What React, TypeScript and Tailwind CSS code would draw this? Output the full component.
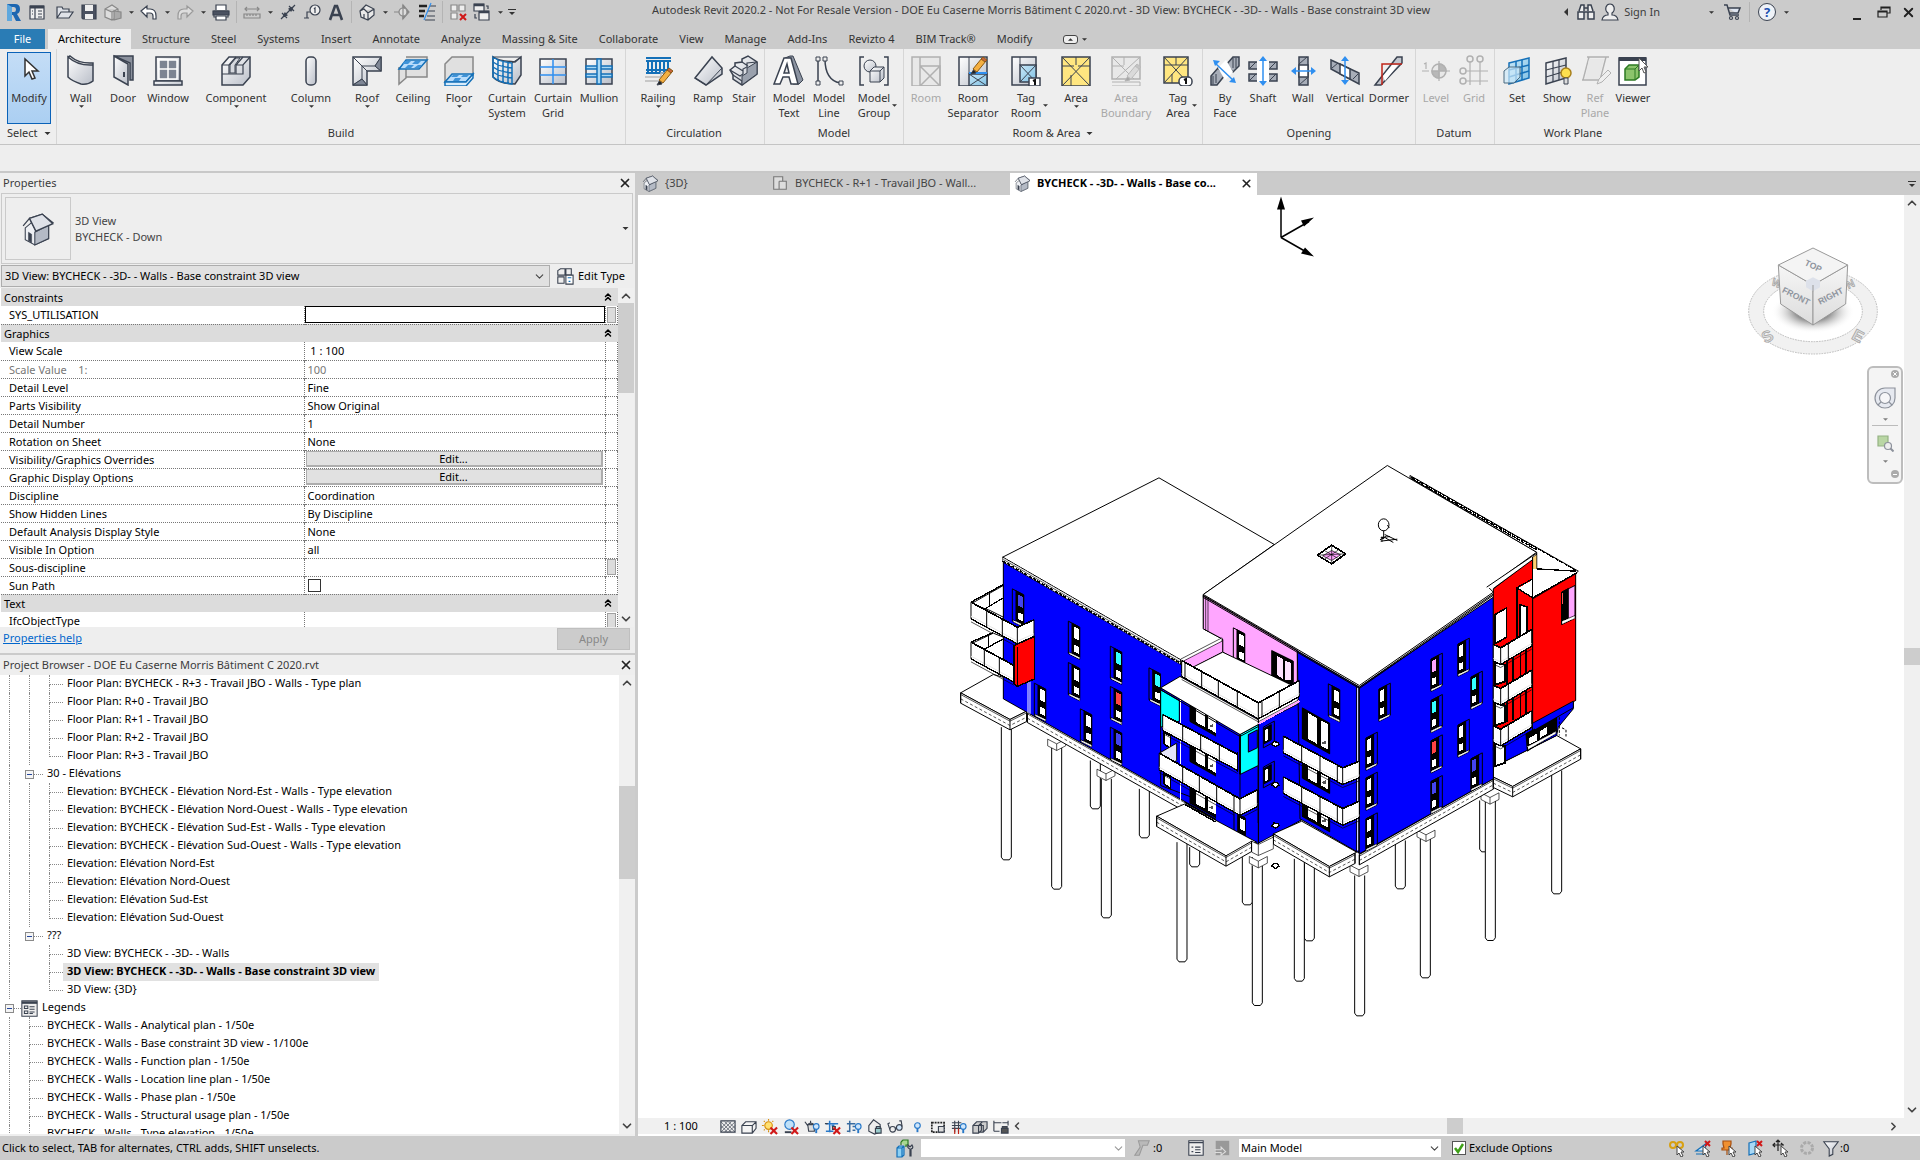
import type { ReactNode } from "react";
import { clsx } from "clsx";
import { ChevronDown, ChevronLeft, ChevronRight, ChevronUp, ChevronsUp, X } from "lucide-react";

const INK = "#3a4250";
const BLUE = "#1470b8";
const METAL = "url(#metal)";
const GLASS = "url(#glass)";
const GOLD = "#ffe680";

/* ---------- shared bits ---------- */

function Ico({ children, size = 32, box = 32, off }: { children: ReactNode; size?: number; box?: number; off?: boolean }) {
  return (
    <svg
      width={size}
      height={size}
      viewBox={`0 0 ${box} ${box}`}
      fill="none"
      stroke={INK}
      strokeWidth={box > 24 ? 1.5 : 1.2}
      className={clsx("shrink-0", off && "opacity-35 grayscale")}
      aria-hidden="true"
    >
      {children}
    </svg>
  );
}

function Caret({ size = 5 }: { size?: number }) {
  return (
    <svg width={size} height="3" viewBox="0 0 6 3" className="shrink-0" aria-hidden="true">
      <path d="M0 0h6L3 3z" fill="#333" />
    </svg>
  );
}

function Defs() {
  return (
    <svg width="0" height="0" className="absolute" aria-hidden="true">
      <defs>
        <linearGradient id="metal" x1="0" y1="0" x2="1" y2="1">
          <stop offset="0" stopColor="#ffffff" />
          <stop offset="1" stopColor="#b9bec8" />
        </linearGradient>
        <linearGradient id="glass" x1="0" y1="0" x2="1" y2="1">
          <stop offset="0" stopColor="#c9e8f8" />
          <stop offset="1" stopColor="#7fc0e4" />
        </linearGradient>
        <linearGradient id="cubeFace" x1="0" y1="0" x2="0" y2="1">
          <stop offset="0" stopColor="#f6f6f6" />
          <stop offset="1" stopColor="#dcdcdc" />
        </linearGradient>
        <radialGradient id="cubeShadow">
          <stop offset="0.4" stopColor="#8c8c8c" />
          <stop offset="1" stopColor="#ffffff" stopOpacity="0" />
        </radialGradient>
      </defs>
    </svg>
  );
}

const pencil = (
  <g strokeWidth="1">
    <path d="M17 27l2 4-5 1z" fill="#222" transform="translate(1 -1)" />
    <path d="M17 26l9-11 4 3-9 11z" fill="#f5b041" stroke="#8a5a14" />
    <path d="M25 16l2-2 4 3-2 2z" fill="#c8643c" stroke="#8a5a14" />
  </g>
);

/* ---------- ribbon icons ---------- */

const icons: Record<string, ReactNode> = {
  modify: <path d="M12 5v17l4-4 3 7 3-1-3-7h6z" fill="#fff" stroke="#333" />,
  wall: <path d="M3 3q10 9 25 8v16q-5 4-12 3Q7 27 3 23zM3 3l2-1q9 8 23 7v2" fill={METAL} />,
  door: (
    <>
      <path d="M7 2h19v24h-3V9z" fill="#8a909c" />
      <path d="M7 2l14 8v21L7 23z" fill={METAL} />
      <path d="M17 18v5" strokeWidth="2" />
    </>
  ),
  window: (
    <>
      <path d="M4 3h24v24H4z" fill={METAL} />
      <path d="M7 6h18v19H7z" fill="#7c8492" stroke="#fff" />
      <path d="M16 6v19M7 15h18" stroke="#fff" />
      <path d="M2 27h28v4H2z" fill={METAL} />
    </>
  ),
  component: (
    <>
      <path d="M2 11l7-8h21v20l-7 8H2z" fill={METAL} />
      <path d="M2 11h7v9h7v-9h7l7-8M9 11l7-8M16 11l7-8M23 11v9H9M2 20h7" strokeWidth="1.2" />
      <path d="M10 11l6-7h4l-5 7v8h-5z" fill="#d5d8de" strokeWidth="1" />
    </>
  ),
  column: <rect x="11" y="3" width="10" height="28" rx="4" fill={METAL} />,
  roof: (
    <>
      <path d="M2 3h28v14H16v14H2z" fill={METAL} />
      <path d="M2 3l9 9h13l6-9M11 12v13l-9 6M24 12l6 5M11 25l5 6M16 17l-5-5" strokeWidth="1" />
      <path d="M11 25l5 6H2zM24 12l6-9v14z" fill="#7f8796" strokeWidth="1" />
    </>
  ),
  ceiling: (
    <>
      <path d="M2 13v17l7-6V8M9 3h21v20H9" fill="#e0e0e0" stroke="#888" />
      <path d="M9 6h21l-8 9H2z" fill="#b8dcfb" stroke={BLUE} />
      <path d="M8 7h6l-3 3h-6zM18 7h6l-3 3h-6zM11 11h6l-3 3H8zM21 11h4l-3 3h-5z" fill="#3f93d8" stroke="none" />
    </>
  ),
  floor: (
    <>
      <path d="M2 10l7-7h21v18H9L2 28z" fill="#e0e0e0" stroke="#888" />
      <path d="M9 20h21l-7 8H2z" fill="#b8dcfb" stroke={BLUE} />
      <path d="M2 28h21l7-8v4l-7 8H2z" fill="#d8ecfc" stroke={BLUE} />
      <path d="M10 21h6l-2 2H8zM20 21h6l-2 2h-6zM12 24h6l-2 3h-6z" fill="#3f93d8" stroke="none" />
    </>
  ),
  curtainSystem: (
    <>
      <path d="M2 3q6 4 22 5l6-5v18l-6 9Q8 30 2 23z" fill={METAL} />
      <path d="M2 3q7 5 19 6v21Q9 29 2 23zM7 6v20M12 8v20M17 9v20M2 8q7 5 19 6M2 13q7 5 19 6M2 18q7 5 19 6" stroke={BLUE} />
      <path d="M2 3h28L21 9" strokeWidth="1" />
    </>
  ),
  curtainGrid: (
    <>
      <path d="M3 5h26v25H3z" fill={METAL} />
      <path d="M16 5v25M3 13h26M3 21h26" stroke="#2f8ff0" />
    </>
  ),
  mullion: (
    <>
      <path d="M3 5h26v25H3z" fill={METAL} />
      <path d="M3 12h26v3H3zM3 20h26v3H3z" fill="#a8d8f5" stroke={BLUE} />
      <path d="M14 5h4v25h-4z" fill="#a8d8f5" stroke={BLUE} />
    </>
  ),
  railing: (
    <>
      <path d="M4 4h25M4 7h25M4 16h25M4 19h25M6 7v12M10 7v12M14 7v12M18 7v12M22 7v12M26 7v12" stroke={BLUE} strokeWidth="2" />
      <path d="M3 23h16v-4h6M3 27h14" stroke="#bbb" />
      {pencil}
    </>
  ),
  ramp: (
    <>
      <path d="M3 24L20 3l10 11v6L14 31z" fill={METAL} />
      <path d="M3 24l11 7L30 14" strokeWidth="1" />
    </>
  ),
  stair: (
    <>
      <path d="M2 16l5-4 0-3 7-1v-3l6-3 9 6v12L14 31l-9-6v-4z" fill={METAL} />
      <path d="M2 16l10 6 3-2v-5l4-2V9l10-1M5 21l9 6v4M7 12l8 5M14 8l6 4" strokeWidth="1.2" />
      <path d="M14 31V22l5-3v-5l10-6v12z" fill="#9aa1ad" strokeWidth="1" />
    </>
  ),
  modelText: (
    <>
      <path d="M12 4l5-2h3l10 24-4 4h-6z" fill="#8b93a1" strokeWidth="1" />
      <path fillRule="evenodd" d="M11 4h7l7 26h-7l-2-7h-6l-3 7H1zM14 10l-3 9h5z" fill="#fff" />
    </>
  ),
  modelLine: (
    <>
      <path d="M5 5v24M12 5q0 21 15 24" />
      <path d="M3 3h4v4H3zM3 27h4v4H3zM10 3h4v4h-4zM26 27h4v4h-4z" fill="#eee" strokeWidth="1" />
    </>
  ),
  modelGroup: (
    <>
      <path d="M6 3H2v28h4M26 3h4v28h-4" />
      <circle cx="12" cy="12" r="6" fill={METAL} strokeWidth="1" />
      <path d="M12 17l4-4h10v11l-4 4H12z" fill={METAL} strokeWidth="1" />
      <path d="M12 17h10v11M22 17l4-4" strokeWidth="1" />
    </>
  ),
  room: (
    <>
      <path d="M2 3h28v29H2z" fill="#ddd" />
      <path d="M10 12h20v20H10zM10 3v9M10 12l20 20M30 12L10 32" />
    </>
  ),
  roomSeparator: (
    <>
      <path d="M2 3h28v29H2z" fill={METAL} />
      <path d="M12 20h18v12H12z" fill={GLASS} />
      <path d="M12 3v17M12 20l18 12M30 20L12 32" strokeWidth="1" />
      <path d="M12 19h18" stroke="#2f8ff0" strokeWidth="2" />
      <g transform="translate(-1 -11)">{pencil}</g>
    </>
  ),
  tagRoom: (
    <>
      <path d="M2 3h24v28H2z" fill={METAL} />
      <path d="M10 11h16v17H10z" fill={GLASS} />
      <path d="M10 3v8M10 11l16 17M26 11L10 28" strokeWidth="1" />
      <path d="M19 24h11v8H19z" fill="#fff" />
      <path d="M23 27l2-1v5" strokeWidth="2" stroke="#111" />
    </>
  ),
  area: (
    <>
      <path d="M2 3h28v29H2z" fill={GOLD} />
      <path d="M2 3l28 29M30 3L2 32M16 3v8M2 12h12M18 12h12M11 21v11" strokeWidth="1" />
    </>
  ),
  areaBoundary: (
    <>
      <path d="M2 3h28v22H2z" fill="#ddd" />
      <path d="M2 3l22 22M30 3L6 25M2 28h28v4H2M14 3v8M2 12h12" strokeWidth="1" />
      <g transform="translate(0 -4)">{pencil}</g>
    </>
  ),
  tagArea: (
    <>
      <path d="M2 3h24v26H2z" fill={GOLD} />
      <path d="M2 3l24 26M26 3L2 29M14 3v8M2 11h24M10 20v9" strokeWidth="1" />
      <rect x="17" y="23" width="13" height="9" rx="4" fill="#fff" />
      <path d="M22 26l2-1v5" strokeWidth="2" stroke="#111" />
    </>
  ),
  byFace: (
    <>
      <path d="M2 31v-9l7-8 7 7-8 10zM17 11l7-8h6v9l-6 6z" fill="#a7adb8" />
      <path d="M9 14l8-8 7 12-8 8z" fill="#fff" stroke="none" />
      <path d="M4 22v8M7 20v9M24 4v10M27 4v10" strokeWidth="1" />
      <path d="M6 9l19 18" stroke="#2f8ff0" />
      <path d="M4 6l7 1-5 5zM27 29l-7-1 5-5z" fill="#2f8ff0" stroke="none" />
    </>
  ),
  shaft: (
    <>
      <path d="M2 8h28v7H2zM2 20h28v7H2z" fill="#a7adb8" />
      <path d="M10 7h12v21H10z" fill="#fff" stroke="none" />
      <path d="M3 14l6-6M23 14l6-6M3 26l6-6M23 26l6-6" strokeWidth="1" />
      <path d="M16 6v22" stroke="#2f8ff0" />
      <path d="M16 2l4 5h-8zM16 32l4-5h-8z" fill="#2f8ff0" stroke="none" />
    </>
  ),
  wallOpening: (
    <>
      <path d="M12 3h9v28h-9z" fill="#a7adb8" />
      <path d="M12 11h9v12h-9z" fill="#fff" />
      <path d="M12 10l8-7M12 31l8-7" strokeWidth="1" />
      <path d="M7 17h18" stroke="#2f8ff0" />
      <path d="M4 17l5-4v8zM29 17l-5-4v8z" fill="#2f8ff0" stroke="none" />
    </>
  ),
  vertical: (
    <>
      <path d="M2 6l28 13v11L2 15z" fill="#a7adb8" />
      <path d="M11 10l10 5v10l-10-5z" fill="#fff" />
      <path d="M3 14l6-5M24 25l5-5" strokeWidth="1" />
      <path d="M16 5v23" stroke="#2f8ff0" />
      <path d="M16 2l4 5h-8zM16 31l4-5h-8z" fill="#2f8ff0" stroke="none" />
    </>
  ),
  dormer: (
    <>
      <path d="M2 31L24 3h5v6L8 31z" fill="#c3c7cf" />
      <path d="M10 22l9-11h6L12 27z" fill="#fff" stroke="none" />
      <path d="M9 31V10h20" stroke="#c02418" />
    </>
  ),
  level: (
    <>
      <circle cx="19" cy="17" r="7" fill="#ddd" />
      <path d="M19 10v7h7a7 7 0 0 0-7-7M19 24v-7h-7a7 7 0 0 0 7 7" fill="#555" />
      <path d="M2 17h7M26 17h4M4 10l2-1v6M19 7v20" strokeWidth="1.2" />
    </>
  ),
  grid: (
    <>
      <path d="M12 8v23M22 8v23M8 17h22M8 27h22" strokeWidth="1.2" />
      <circle cx="12" cy="5" r="3" />
      <circle cx="22" cy="5" r="3" />
      <circle cx="5" cy="17" r="3" />
      <circle cx="5" cy="27" r="3" />
    </>
  ),
  set: (
    <>
      <path d="M8 9l20-5v20L8 30z" fill={GLASS} stroke={BLUE} />
      <path d="M15 7v21M21 6v20M8 16l20-5M8 23l20-6" stroke={BLUE} />
      <path d="M3 17l5-4h11v10l-6 6H3z" fill="#cfeaf9" fillOpacity="0.7" stroke="#4a6a80" strokeWidth="1" />
    </>
  ),
  show: (
    <>
      <path d="M5 9l20-5v20L5 30z" fill={METAL} />
      <path d="M12 7v21M18 6v20M5 16l20-5M5 23l20-6" strokeWidth="1.2" />
      <circle cx="25" cy="19" r="5" fill="#fde04e" stroke="#a8801c" />
      <path d="M23 24h4v6h-4z" fill="#ddd" strokeWidth="1" />
    </>
  ),
  refPlane: (
    <>
      <path d="M8 3h22M10 3L4 26M27 3l-6 23M3 26h20" strokeWidth="1.4" />
      <path d="M10 5h15l-5 20H6z" fill="#ddd" stroke="none" />
      <path d="M18 30l2-5 9-9 3 3-9 9z" fill="#eee" strokeWidth="1" />
    </>
  ),
  viewer: (
    <>
      <path d="M2 4h27v27H2z" fill="#fff" />
      <path d="M2 5h27" strokeWidth="4" />
      <path d="M8 15l4-4h10v12l-4 3H8z" fill="#8cc46c" stroke="#2c7a22" />
      <path d="M8 15h10v11M18 15l4-4" stroke="#2c7a22" strokeWidth="1" />
      <path d="M22 4v13l3-3 2 5 2-1-2-5h4z" fill="#fff" stroke="#555" strokeWidth="1" />
    </>
  ),
};

interface Tool {
  icon: string;
  lines: string[];
  width: string;
  menu?: boolean;
  off?: boolean;
}

const panels: { name: string; menu?: boolean; pad?: string; tools: Tool[] }[] = [
  {
    name: "Build",
    pad: "px-0.5",
    tools: [
      { icon: "wall", lines: ["Wall"], width: "w-11", menu: true },
      { icon: "door", lines: ["Door"], width: "w-10" },
      { icon: "window", lines: ["Window"], width: "w-[50px]" },
      { icon: "component", lines: ["Component"], width: "w-[86px]", menu: true },
      { icon: "column", lines: ["Column"], width: "w-16", menu: true },
      { icon: "roof", lines: ["Roof"], width: "w-12", menu: true },
      { icon: "ceiling", lines: ["Ceiling"], width: "w-11" },
      { icon: "floor", lines: ["Floor"], width: "w-12", menu: true },
      { icon: "curtainSystem", lines: ["Curtain", "System"], width: "w-12" },
      { icon: "curtainGrid", lines: ["Curtain", "Grid"], width: "w-11" },
      { icon: "mullion", lines: ["Mullion"], width: "w-12" },
    ],
  },
  {
    name: "Circulation",
    pad: "pr-0.5",
    tools: [
      { icon: "railing", lines: ["Railing"], width: "w-16", menu: true },
      { icon: "ramp", lines: ["Ramp"], width: "w-9" },
      { icon: "stair", lines: ["Stair"], width: "w-9" },
    ],
  },
  {
    name: "Model",
    pad: "px-0.5",
    tools: [
      { icon: "modelText", lines: ["Model", "Text"], width: "w-11" },
      { icon: "modelLine", lines: ["Model", "Line"], width: "w-9" },
      { icon: "modelGroup", lines: ["Model", "Group"], width: "w-[54px]", menu: true },
    ],
  },
  {
    name: "Room & Area",
    menu: true,
    tools: [
      { icon: "room", lines: ["Room"], width: "w-11", off: true },
      { icon: "roomSeparator", lines: ["Room", "Separator"], width: "w-[50px]" },
      { icon: "tagRoom", lines: ["Tag", "Room"], width: "w-14", menu: true },
      { icon: "area", lines: ["Area"], width: "w-11", menu: true },
      { icon: "areaBoundary", lines: ["Area", "Boundary"], width: "w-14", off: true },
      { icon: "tagArea", lines: ["Tag", "Area"], width: "w-12", menu: true },
    ],
  },
  {
    name: "Opening",
    pad: "px-0.5",
    tools: [
      { icon: "byFace", lines: ["By", "Face"], width: "w-10" },
      { icon: "shaft", lines: ["Shaft"], width: "w-9" },
      { icon: "wallOpening", lines: ["Wall"], width: "w-11" },
      { icon: "vertical", lines: ["Vertical"], width: "w-10" },
      { icon: "dormer", lines: ["Dormer"], width: "w-12" },
    ],
  },
  {
    name: "Datum",
    pad: "pr-0.5",
    tools: [
      { icon: "level", lines: ["Level"], width: "w-10", off: true },
      { icon: "grid", lines: ["Grid"], width: "w-9", off: true },
    ],
  },
  {
    name: "Work Plane",
    pad: "pr-1",
    tools: [
      { icon: "set", lines: ["Set"], width: "w-11" },
      { icon: "show", lines: ["Show"], width: "w-9" },
      { icon: "refPlane", lines: ["Ref", "Plane"], width: "w-10", off: true },
      { icon: "viewer", lines: ["Viewer"], width: "w-9" },
    ],
  },
];

function ToolButton({ icon, lines, width, menu, off }: Tool) {
  const two = lines.length > 1;
  return (
    <button
      type="button"
      disabled={off}
      className={clsx("flex flex-col items-center pt-[5px] leading-[15px] whitespace-nowrap", width, off && "text-[#a8a8a8]")}
    >
      <Ico off={off}>{icons[icon]}</Ico>
      <span className="mt-1 flex items-center gap-0.5">
        {two && menu && <span className="w-[5px]" />}
        <span className="flex flex-col items-center">
          {lines.map((line) => (
            <span key={line}>{line}</span>
          ))}
        </span>
        {two && menu && <Caret />}
      </span>
      {!two && menu && <Caret />}
    </button>
  );
}

function Ribbon() {
  return (
    <div className="flex h-24 shrink-0 border-b border-[#c4c4c4] bg-[#eee] text-[#333]">
      <div className="flex w-[57px] flex-col border-r border-[#d6d6d6] pt-[3px] pl-[7px]">
        <button
          type="button"
          className="flex h-[72px] w-11 flex-col items-center border border-[#0a62b8] bg-linear-to-b from-[#c4ddf6] to-[#abcff2] pt-px leading-[15px]"
        >
          <Ico>{icons.modify}</Ico>
          <span className="mt-1">Modify</span>
        </button>
        <button type="button" className="flex h-[18px] items-center gap-1.5">
          Select <Caret size={7} />
        </button>
      </div>
      {panels.map((p) => (
        <div key={p.name} className={clsx("flex flex-col justify-between border-r border-[#d6d6d6] pb-0.5 last:border-r-0", p.pad)}>
          <div className="flex items-start">
            {p.tools.map((tool) => (
              <ToolButton key={tool.icon} {...tool} />
            ))}
          </div>
          <div className="flex h-[18px] items-center justify-center gap-1.5">
            {p.name}
            {p.menu && <Caret size={7} />}
          </div>
        </div>
      ))}
    </div>
  );
}

/* ---------- title bar ---------- */

const quick: Record<string, ReactNode> = {
  logo: (
    <>
      <path d="M4 2h8q5 0 5 5 0 4-3 5l4 7h-5l-3-6H9v6H4z" fill="#1d66b0" stroke="none" />
      <path d="M9 5h2q2 0 2 2.500t-2 2.500H9z" fill="#cbcbcb" stroke="none" />
      <path d="M4 2l5 3v14H4z" fill="#5fa8de" stroke="none" />
    </>
  ),
  home: (
    <>
      <path d="M3 4h14v13H3z" fill="#eee" />
      <path d="M3 5h14" strokeWidth="3" />
      <path d="M8 6v11M11 9h4M11 12h4M11 15h4M5 9h1M5 12h1" />
    </>
  ),
  open: <path d="M2 16V5h5l1 2h6v3M2 16l4-6h12l-4 6z" fill="#dfe2e8" />,
  save: (
    <>
      <path d="M3 3h14v14H4l-1-1z" fill="#4a5160" />
      <path d="M6 3h8v6H6zM6 12h8v5H6z" fill="#eee" stroke="none" />
    </>
  ),
  sync: (
    <g stroke="#888">
      <path d="M2 7l7-4 6 4v8l-6 3-7-3zM2 7l7 3 6-3M9 10v8" fill="#ddd" />
      <path d="M11 9l7 1v6l-7 2z" fill="#aaa" />
    </g>
  ),
  undo: <path d="M2 9l6-5v3h3q6 0 6 7v3h-3v-3q0-3-3-3H8v4z" fill="#fff" />,
  redo: <path d="M18 9l-6-5v3H9q-6 0-6 7v3h3v-3q0-3 3-3h3v4z" fill="#ddd" stroke="#999" />,
  print: (
    <>
      <path d="M5 8V3h10v5M3 9h14v6H3z" fill="#fff" />
      <path d="M2 9h16v4H2z" fill="#4a5160" />
      <path d="M5 14h10v4H5z" fill="#fff" />
    </>
  ),
  measure: (
    <g stroke="#888">
      <path d="M3 7h14M5 5L3 7l2 2M15 5l2 2-2 2M2 12h16v4H2zM5 12v2M8 12v2M11 12v2M14 12v2" />
    </g>
  ),
  dimension: <path d="M3 17L17 3M4 11l5 5M11 4l5 5M5 15l2-4 2 2zM15 5l-4 2 2 2z" fill={INK} />,
  tag: (
    <>
      <circle cx="13" cy="8" r="5" fill="#eee" />
      <path d="M12 7l1-1v5M8 10H5v6M2 16h5" />
    </>
  ),
  text: <path d="M4 18L9 4h2l5 14M6 13h8" strokeWidth="2.600" />,
  view3d: <path d="M3 9l6-6 8 4v6l-6 5-7-3zM3 9l4-2 4 4 6-4M11 11v7M7 12v4" fill="#e8e8e8" />,
  section: (
    <>
      <path d="M10 3l6 7-6 7z" fill="#888" stroke="#888" />
      <circle cx="10" cy="10" r="4" fill="#ddd" stroke="#888" />
      <path d="M1 10h5M10 3v14" stroke="#888" />
    </>
  ),
  thinLines: (
    <>
      <path d="M2 4h8M2 9h6M2 14h5" strokeWidth="2.500" stroke="#222" />
      <path d="M13 4h6M11 9h7M10 14h8M8 18h10" />
      <path d="M14 1L7 18" stroke="#2f8ff0" />
    </>
  ),
  closeHidden: (
    <>
      <path d="M3 3h6v6H3zM11 3h6v6h-6zM3 11h6v6H3z" fill="#eee" stroke="#888" />
      <path d="M12 12l6 6M18 12l-6 6" stroke="#d01818" strokeWidth="2" />
    </>
  ),
  switch: (
    <>
      <path d="M2 2h10v7H2zM7 9h10v9H7z" fill="#eee" />
      <path d="M2 3h10M7 10h10" strokeWidth="2.500" />
      <path d="M3 12v4h2M16 7V4h-2" />
    </>
  ),
};

const quickBar: { name: string; menu?: boolean; gap?: boolean; sep?: boolean }[] = [
  { name: "logo" },
  { name: "home", gap: true },
  { name: "open" },
  { name: "save" },
  { name: "sync", menu: true },
  { name: "undo", menu: true },
  { name: "redo", menu: true },
  { name: "print", sep: true },
  { name: "measure", menu: true },
  { name: "dimension" },
  { name: "tag" },
  { name: "text", sep: true },
  { name: "view3d", menu: true },
  { name: "section" },
  { name: "thinLines", sep: true },
  { name: "closeHidden" },
  { name: "switch", menu: true },
];

function TitleBar() {
  return (
    <header className="flex h-[29px] shrink-0 items-start pt-px text-[#3c3c3c]">
      <div className="flex h-[22px] items-center pl-px">
        {quickBar.map((q) => (
          <div key={q.name} className="flex h-full items-center">
            <button type="button" aria-label={q.name} className="flex w-6 justify-center">
              <Ico size={20} box={20}>{quick[q.name]}</Ico>
            </button>
            {q.menu && (
              <span className="flex w-3 justify-center">
                <Caret />
              </span>
            )}
            {q.gap && <span className="w-1" />}
            {q.sep && <span className="mx-[3px] h-full w-px bg-[#b4b4b4]" />}
          </div>
        ))}
        <button type="button" aria-label="Customize" className="flex w-3 flex-col items-center gap-0.5">
          <span className="h-px w-2 bg-[#333]" />
          <Caret size={8} />
        </button>
      </div>
      <h1 className="flex-1 truncate text-center leading-[18px]">
        Autodesk Revit 2020.2 - Not For Resale Version - DOE Eu Caserne Morris Bâtiment C 2020.rvt - 3D View: BYCHECK - -3D- - Walls - Base constraint 3D view
      </h1>
      <div className="flex h-[22px] items-center">
        <svg width="4" height="8" viewBox="0 0 4 8" aria-hidden="true">
          <path d="M4 0v8L0 4z" fill="#333" />
        </svg>
        <button type="button" aria-label="Search" className="ml-2 w-6">
          <Ico size={20} box={20}>
            <path d="M3 9l2-6h3v6M17 9l-2-6h-3v6M8 6h4M8 10h4M2 10h6v7H2zM12 10h6v7h-6z" fill="#eee" strokeWidth="1.500" />
          </Ico>
        </button>
        <button type="button" className="flex items-center gap-1">
          <Ico size={20} box={20}>
            <path d="M2 18q1-5 6-5v-2Q5 9 6 5q1-3 4-3t4 3q1 4-2 6v2q5 0 6 5z" fill="#eee" />
          </Ico>
          Sign In
        </button>
        <span className="flex w-[54px] justify-end">
          <Caret />
        </span>
        <button type="button" aria-label="App Store" className="ml-2 w-7 border-r border-[#b4b4b4]">
          <Ico size={20} box={20}>
            <path d="M2 3h3l3 10h9M6 6h12l-2 5H7" fill="#dfe6f2" strokeWidth="1.500" />
            <circle cx="9" cy="16" r="1.500" />
            <circle cx="15" cy="16" r="1.500" />
          </Ico>
        </button>
        <button type="button" aria-label="Help" className="ml-2 flex size-[18px] items-center justify-center rounded-full border border-[#3a4250] bg-[#eef2f8] text-[13px] leading-none font-bold text-[#1c50b0]">
          ?
        </button>
        <span className="ml-2">
          <Caret />
        </span>
        <button type="button" aria-label="Minimize" className="ml-16 flex h-[15px] w-4 items-end">
          <span className="h-[2px] w-2 bg-[#222]" />
        </button>
        <button type="button" aria-label="Restore" className="ml-2 w-4">
          <Ico size={14} box={14}>
            <path d="M4 5V2h9v6h-3M4 3h9M1 6h9v6H1zM1 7h9" stroke="#222" />
          </Ico>
        </button>
        <button type="button" aria-label="Close" className="mr-1 ml-2">
          <X size={15} strokeWidth={3} color="#222" />
        </button>
      </div>
    </header>
  );
}

const menuTabs = [
  "Architecture", "Structure", "Steel", "Systems", "Insert", "Annotate", "Analyze", "Massing & Site",
  "Collaborate", "View", "Manage", "Add-Ins", "Revizto 4", "BIM Track®", "Modify",
];

function MenuTabs() {
  return (
    <nav className="flex h-5 shrink-0 items-stretch gap-px text-[#333]">
      <button type="button" className="mr-0.5 w-[45px] bg-[#2a7cb5] text-white">File</button>
      {menuTabs.map((name, i) => (
        <button key={name} type="button" className={clsx("px-[10px]", i === 0 && "bg-[#eee] text-black")}>
          {name}
        </button>
      ))}
      <button type="button" aria-label="Ribbon display" className="ml-5 flex items-center gap-1">
        <span className="flex h-[9px] w-[15px] items-center justify-center rounded-[3px] border border-[#444] bg-[#eee]">
          <span className="rotate-180"><Caret /></span>
        </span>
        <Caret />
      </button>
    </nav>
  );
}

/* ---------- properties ---------- */

function House({ size }: { size: number }) {
  return (
    <Ico size={size}>
      <path d="M4 15v11l9 5 13-6V13l-9-9z" fill="#eef0f4" strokeWidth="1" />
      <path d="M13 31V19l13-7v13z" fill="#b4bac5" strokeWidth="1" />
      <path d="M2 13L8 6l6 12 16-8-10-8L8 6" fill={METAL} strokeWidth="1.200" />
      <path d="M14 18l16-7-10-9L8 6z" fill="#dfe2e8" strokeWidth="1.200" />
      <path d="M7 19l3 2v8l-3-2z" fill={INK} strokeWidth="0.500" />
    </Ico>
  );
}

type Row = { label: string; value?: string; kind?: "group" | "input" | "edit" | "more" | "check" | "off" };

const rows: Row[] = [
  { label: "Constraints", kind: "group" },
  { label: "SYS_UTILISATION", kind: "input" },
  { label: "Graphics", kind: "group" },
  { label: "View Scale", value: " 1 : 100" },
  { label: "Scale Value    1:", value: "100", kind: "off" },
  { label: "Detail Level", value: "Fine" },
  { label: "Parts Visibility", value: "Show Original" },
  { label: "Detail Number", value: "1" },
  { label: "Rotation on Sheet", value: "None" },
  { label: "Visibility/Graphics Overrides", kind: "edit" },
  { label: "Graphic Display Options", kind: "edit" },
  { label: "Discipline", value: "Coordination" },
  { label: "Show Hidden Lines", value: "By Discipline" },
  { label: "Default Analysis Display Style", value: "None" },
  { label: "Visible In Option", value: "all" },
  { label: "Sous-discipline", kind: "more" },
  { label: "Sun Path", kind: "check" },
  { label: "Text", kind: "group" },
  { label: "IfcObjectType", kind: "more" },
];

function MoreButton() {
  return <button type="button" aria-label="More" className="block h-4 w-[9px] border border-[#a0a0a0] bg-[#dcdcdc]" />;
}

function PropertyRow({ label, value, kind }: Row) {
  if (kind === "group") {
    return (
      <tr className="h-[18px] bg-[#dcdcdc]">
        <th colSpan={3} className="p-0 font-normal">
          <button type="button" className="flex w-full items-center justify-between pr-1 pl-[3px]">
            {label}
            <ChevronsUp size={12} strokeWidth={3} />
          </button>
        </th>
      </tr>
    );
  }
  const id = label.replace(/\W/g, "");
  return (
    <tr className={clsx("h-[18px] border-b border-dotted border-[#777]", kind === "off" && "text-[#777]")}>
      <td className="border-r border-dotted border-[#777] p-0 pl-2 whitespace-pre">
        <label htmlFor={id} className="block">{label}</label>
      </td>
      <td className={clsx("border-r border-dotted border-[#777] p-0 whitespace-pre", value && "pl-[3px]")}>
        {kind === "input" && <input id={id} className="block h-[17px] w-full border border-black bg-white px-1 outline-none" />}
        {kind === "edit" && (
          <button id={id} type="button" className="ml-px block h-4 w-[297px] border border-r-2 border-b-2 border-[#adadad] bg-[#e1e1e1] leading-3">
            Edit...
          </button>
        )}
        {kind === "check" && (
          <input id={id} type="checkbox" className="ml-[3px] block size-[13px] appearance-none border border-[#333] bg-white" />
        )}
        {value}
      </td>
      <td className="border-r border-dotted border-[#777] p-0 pl-px">{(kind === "input" || kind === "more") && <MoreButton />}</td>
    </tr>
  );
}

function ScrollBar({ thumb }: { thumb: string }) {
  return (
    <div className="flex w-4 shrink-0 flex-col items-center justify-between bg-[#f0f0f0] py-px text-[#444]">
      <ChevronUp size={14} strokeWidth={3} />
      <div className="flex w-full flex-1 flex-col">
        <div className={clsx("w-full bg-[#cdcdcd]", thumb)} />
      </div>
      <ChevronDown size={14} strokeWidth={3} />
    </div>
  );
}

function PanelTitle({ title }: { title: string }) {
  return (
    <div className="flex h-5 shrink-0 items-center justify-between pr-0.5 pl-[3px] text-[#3c3c3c]">
      <h2>{title}</h2>
      <button type="button" aria-label={`Close ${title}`}>
        <X size={14} strokeWidth={3} color="#222" />
      </button>
    </div>
  );
}

function Properties() {
  return (
    <section className="flex h-[480px] shrink-0 flex-col pr-px">
      <PanelTitle title="Properties" />
      <div className="mx-px flex h-[71px] shrink-0 items-center border border-[#cacaca] p-[3px] text-[#444]">
        <div className="flex h-full w-[66px] items-center justify-center border border-[#cacaca]">
          <House size={34} />
        </div>
        <p className="flex-1 pl-1 leading-4">3D View<br />BYCHECK - Down</p>
        <Caret size={7} />
      </div>
      <div className="mt-px flex h-[22px] shrink-0 items-center pl-px">
        <div className="relative h-full flex-1">
          <select aria-label="View" className="h-full w-full appearance-none border border-[#adadad] bg-[#e1e1e1] px-[3px] text-black">
            <option>3D View: BYCHECK - -3D- - Walls - Base constraint 3D view</option>
          </select>
          <ChevronDown size={13} className="pointer-events-none absolute top-[5px] right-1 text-[#444]" />
        </div>
        <button type="button" className="flex w-[84px] items-center gap-1 pl-1.5 whitespace-nowrap">
          <Ico size={18} box={20}>
            <path d="M2 4l3-2h5v7H2zM11 2h6v7h-6zM2 11h7v7H2z" fill="#eee" />
            <path d="M11 9h8v10h-8z" fill="#fff" />
            <path d="M13 12h4M14 16h2" stroke={BLUE} />
          </Ico>
          Edit Type
        </button>
      </div>
      <div className="mt-px flex min-h-0 flex-1 overflow-hidden bg-white text-black">
        <div className="min-w-0 flex-1 overflow-hidden pl-px">
          <table className="w-full table-fixed border-collapse text-left leading-[15px]">
            <colgroup>
              <col className="w-[303px]" />
              <col />
              <col className="w-3" />
            </colgroup>
            <tbody>
              {rows.map((row) => (
                <PropertyRow key={row.label} {...row} />
              ))}
            </tbody>
          </table>
        </div>
        <ScrollBar thumb="h-[90px]" />
      </div>
      <div className="flex h-[26px] shrink-0 items-start justify-between pt-px pr-1 pl-[3px]">
        <a href="#help" className="leading-5 text-[#0066cc] underline">Properties help</a>
        <button type="button" disabled className="h-[22px] w-[73px] border border-[#bfbfbf] bg-[#ccc] text-[#888]">Apply</button>
      </div>
    </section>
  );
}

/* ---------- project browser ---------- */

type Node = { text: string; guides: number; kind?: "group" | "legend"; last?: boolean; active?: boolean };

const tree: Node[] = [
  { text: "Floor Plan: BYCHECK - R+3 - Travail JBO - Walls - Type plan", guides: 2 },
  { text: "Floor Plan: R+0 - Travail JBO", guides: 2 },
  { text: "Floor Plan: R+1 - Travail JBO", guides: 2 },
  { text: "Floor Plan: R+2 - Travail JBO", guides: 2 },
  { text: "Floor Plan: R+3 - Travail JBO", guides: 2, last: true },
  { text: "30 - Elévations", guides: 1, kind: "group" },
  { text: "Elevation: BYCHECK - Elévation Nord-Est - Walls - Type elevation", guides: 2 },
  { text: "Elevation: BYCHECK - Elévation Nord-Ouest - Walls - Type elevation", guides: 2 },
  { text: "Elevation: BYCHECK - Elévation Sud-Est - Walls - Type elevation", guides: 2 },
  { text: "Elevation: BYCHECK - Elévation Sud-Ouest - Walls - Type elevation", guides: 2 },
  { text: "Elevation: Elévation Nord-Est", guides: 2 },
  { text: "Elevation: Elévation Nord-Ouest", guides: 2 },
  { text: "Elevation: Elévation Sud-Est", guides: 2 },
  { text: "Elevation: Elévation Sud-Ouest", guides: 2, last: true },
  { text: "???", guides: 1, kind: "group" },
  { text: "3D View: BYCHECK - -3D- - Walls", guides: 2 },
  { text: "3D View: BYCHECK - -3D- - Walls - Base constraint 3D view", guides: 2, active: true },
  { text: "3D View: {3D}", guides: 2, last: true },
  { text: "Legends", guides: 0, kind: "legend" },
  { text: "BYCHECK - Walls - Analytical plan - 1/50e", guides: 1 },
  { text: "BYCHECK - Walls - Base constraint 3D view - 1/100e", guides: 1 },
  { text: "BYCHECK - Walls - Function plan - 1/50e", guides: 1 },
  { text: "BYCHECK - Walls - Location line plan - 1/50e", guides: 1 },
  { text: "BYCHECK - Walls - Phase plan - 1/50e", guides: 1 },
  { text: "BYCHECK - Walls - Structural usage plan - 1/50e", guides: 1 },
  { text: "BYCHECK - Walls - Type elevation - 1/50e", guides: 1 },
];

function TreeRow({ text, guides, kind, last, active, bare }: Node & { bare: boolean }) {
  return (
    <li className="flex h-[18px] shrink-0 items-center pl-[9px]">
      {guides > 0 && <span className="h-full w-5 border-l border-dotted border-[#888]" />}
      {guides > 1 && <span className={clsx("h-full w-5", !bare && "border-l border-dotted border-[#888]")} />}
      {kind ? (
        <>
          <button type="button" aria-label={`Collapse ${text}`} className="-ml-1 flex size-[9px] items-center justify-center border border-[#8a8a8a] bg-[#f4f4f4]">
            <span className="h-px w-[5px] bg-[#24469c]" />
          </button>
          <span className={clsx("border-t border-dotted border-[#888]", kind === "group" ? "w-[9px]" : "w-[7px]")} />
        </>
      ) : (
        <span className="flex h-full w-[14px] flex-col">
          <span className="h-[10px] border-b border-l border-dotted border-[#888]" />
          {!last && <span className="flex-1 border-l border-dotted border-[#888]" />}
        </span>
      )}
      {kind === "legend" && (
        <Ico size={17} box={20}>
          <path d="M1 1h18v18H1z" fill="#eee" />
          <path d="M1 3h18" strokeWidth="3" />
          <path d="M4 7h4v3H4zM4 13h4v3H4zM10 8h6M10 11h6M10 14h6M10 16h4" />
        </Ico>
      )}
      <span className={clsx("h-full px-1 whitespace-nowrap", active && "bg-[#e1e1e1] font-bold")}>{text}</span>
    </li>
  );
}

function ProjectBrowser() {
  return (
    <section className="flex min-h-0 flex-1 flex-col border-t-2 border-[#cbcbcb] pb-0.5">
      <PanelTitle title="Project Browser - DOE Eu Caserne Morris Bâtiment C 2020.rvt" />
      <div className="flex min-h-0 flex-1 overflow-hidden bg-white text-black">
        <ul className="flex min-w-0 flex-1 flex-col overflow-hidden">
          {tree.map((node, i) => (
            <TreeRow key={node.text} {...node} bare={i > 14 && i < 18} />
          ))}
        </ul>
        <ScrollBar thumb="mt-24 h-[93px]" />
      </div>
    </section>
  );
}

/* ---------- model drawing ---------- */

// x, top, bottom of each pile
const piles = [
  [451, 930, 1075], [598, 1015, 1162], [749, 1190, 1249], [907, 1220, 1363], [1093, 1240, 1471],
  [1366, 1170, 1315], [1619, 1050, 1204], [1835, 960, 1330], [184, 830, 1228], [335, 890, 1316],
  [484, 985, 1402], [711, 1175, 1534], [937, 1245, 1665], [1063, 1225, 1592], [1244, 1275, 1696],
  [1441, 1165, 1582], [1636, 1050, 1470],
];

const caps = [[350, 880], [498, 970], [955, 1232], [1257, 1258], [1458, 1153], [1650, 1041]];

function Opening({ x, y, flip, glass = "#fff", wall = "#00f" }: { x: number; y: number; flip?: boolean; glass?: string; wall?: string }) {
  return (
    <g transform={`translate(${x} ${y})${flip ? " scale(-1 1)" : ""}`}>
      <path d="M0 0L34 18V113L0 96z" fill={wall} />
      <path d="M11 6L34 18V108L11 97z" fill="#000" />
      <path d="M18 17L32 24V58L18 51z" fill={glass} stroke="none" />
      <path d="M18 71L32 77V98L18 91z" fill="#fff" stroke="none" />
      <path d="M2 93L34 108V115L2 99z" fill="#fff" strokeWidth="2" />
    </g>
  );
}

// double patio door
function Patio({ x, y, h = 90 }: { x: number; y: number; h?: number }) {
  return (
    <g transform={`translate(${x} ${y})`}>
      <path d={`M-10 -6L72 40V${h + 44}L-10 ${h - 2}z`} fill="#000" />
      <path d={`M8 10L34 25V${h + 14}L8 ${h}z`} fill="#fff" stroke="none" />
      <path d={`M45 31L68 43V${h + 32}L45 ${h + 20}z`} fill="#fff" stroke="none" />
      <path d={`M46 ${h + 12}l14 -8v12z`} fill="#555" stroke="none" />
    </g>
  );
}

// parapet that runs through the points, h tall
function Rail({ pts, h = 50, posts = [] }: { pts: number[][]; h?: number; posts?: number[][] }) {
  const top = pts.map((p) => p.join(" ")).join("L");
  const bottom = [...pts].reverse().map(([x, y]) => `${x} ${y + h}`).join("L");
  return (
    <g>
      <path d={`M${top}L${bottom}z`} fill="#fff" strokeWidth="3" />
      <path d={`M${pts.map(([x, y]) => `${x} ${y + h - 8}`).join("L")}`} fill="none" stroke="#e4e4e4" strokeWidth="3" />
      <path d={`M${top}`} fill="none" strokeWidth="5" />
      <path d={`M${bottom}`} fill="none" strokeWidth="4" />
      <path d={`M${[...pts].reverse().map(([x, y]) => `${x} ${y + h + 9}`).join("L")}`} fill="none" strokeWidth="2" />
      {[...posts, ...pts.slice(1, -1)].map(([x, y]) => (
        <path key={x} d={`M${x} ${y}v${h}`} />
      ))}
    </g>
  );
}

function Slab({ top, edge }: { top: string; edge: number[][] }) {
  const line = edge.map((p) => p.join(" ")).join("L");
  const low = [...edge].reverse().map(([x, y]) => `${x} ${y + 31}`).join("L");
  return (
    <g fill="#fff">
      <path d={top} />
      <path d={`M${line}L${low}z`} />
      <path d={`M${edge.map(([x, y]) => `${x} ${y + 5}`).join("L")}`} fill="none" strokeWidth="2" />
      <path d={`M${edge.map(([x, y]) => `${x} ${y + 18}`).join("L")}`} fill="none" strokeWidth="2" strokeDasharray="9 7" />
      {edge.map(([x, y]) => (
        <path key={x} d={`M${x} ${y}v31`} />
      ))}
    </g>
  );
}

function Building() {
  return (
    <g transform="translate(302 255) scale(0.333333)" stroke="#000" strokeWidth="3" strokeLinejoin="round" shapeRendering="crispEdges">
      {piles.map(([x, a, b]) => (
        <path key={x} d={`M${x} ${a}V${b - 8}l6 8h18l6 -8V${a}`} fill="#fff" />
      ))}
      {caps.map(([x, y]) => (
        <path key={x} d={`M${x - 27} ${y - 14}l27 14 27 -14v20l-27 14 -27 -14zM${x} ${y}v20`} fill="#fff" strokeWidth="2" />
      ))}

      {/* foundations */}
      <Slab top="M262 782L700 1030L955 1175" edge={[[262, 785], [955, 1176]]} />
      <Slab top="M1258 1210L1660 985" edge={[[1258, 1212], [1660, 985]]} />
      <Slab top="M62 727L160 672L260 700V782L210 807z" edge={[[62, 727], [210, 807], [260, 782]]} />
      <Slab top="M1660 980L1718 1008L1922 895L1850 855L1660 950z" edge={[[1660, 980], [1718, 1008], [1922, 895]]} />

      {/* west wing */}
      <path d="M190 335L722 640L955 760V1178L190 745z" fill="#00f" />
      <path d="M188 320L657 82L1003 282L790 432V535L848 566L722 628z" fill="#fff" />
      <path d="M188 320V334L722 642V628zM190 327L722 635" fill="#fff" strokeWidth="2" />
      <path d="M188 331L722 639" strokeDasharray="10 5" strokeWidth="4" fill="none" />
      <path d="M955 820L1085 755V1108L955 1178z" fill="#00f" />

      {/* recessed upper floor */}
      <path d="M790 435L1072 600V730L848 605V566L790 535z" fill="#ffa6ff" />
      <path d="M722 630L848 568V605L740 662z" fill="#ffa6ff" />
      <path d="M722 626L846 562V572L722 636z" fill="#fff" strokeWidth="2" />
      <path d="M797 440V540M804 444V544" strokeWidth="2" />
      <Opening x={880} y={532} wall="#ffa6ff" />
      <path d="M995 600L1060 632V705L995 680z" fill="#000" />
      <path d="M1010 615L1028 625V685L1010 672zM1036 630L1053 638V690L1036 688z" fill="#ffe0ff" stroke="none" />
      <path d="M735 662L848 605L1078 715L955 800z" fill="#fff" />

      {/* east block */}
      <path d="M1072 602L1258 710V1208L1080 1105z" fill="#00f" />
      <path d="M1258 710L1660 440V985L1258 1210z" fill="#00f" />
      <path d="M1660 415L1778 325V835L1660 900z" fill="#f00" />
      <path d="M1778 820L1900 752V775L1855 830L1850 855L1690 935L1660 950V890z" fill="#00f" />
      <path d="M790 432L1342 45L1790 305L1645 410L1660 425L1258 705z" fill="#fff" />
      <path d="M790 432V441L1258 714L1660 434M790 437L1258 710L1660 430" fill="none" strokeWidth="3" />
      <path d="M1410 82V75L1915 362L1906 370L1880 362L1790 355V305z" fill="#fff" />
      <path d="M1416 85L1790 298M1415 79L1904 357" fill="none" strokeWidth="4" strokeDasharray="12 3" />
      <path d="M1640 410L1790 308L1788 320L1660 414" fill="#fff" strokeWidth="3" />
      <path d="M1778 320L1790 312V366L1784 376L1778 370z" fill="#ffd070" strokeWidth="2" />
      <path d="M1778 445L1907 370V750L1778 820z" fill="#f00" />
      <path d="M1730 415L1778 388V355L1790 355L1907 362V370L1778 442z" fill="#fff" stroke="none" />
      <path d="M1730 412L1778 442L1912 366M1790 355L1907 362M1778 320V840M1730 412L1778 385" fill="none" strokeWidth="4" />
      <path d="M1732 415V560" strokeWidth="7" />
      <path d="M1865 425L1905 405V502L1865 522z" fill="#ffa6ff" />
      <path d="M1865 425L1885 414V510L1865 520z" fill="#000" />
      <path d="M1865 512L1905 495V504L1865 522z" fill="#fff" strokeWidth="2" />
      <path d="M1867 428V460" stroke="#f55" strokeWidth="4" />
      <path d="M1250 708V1205M1256 708V1208" stroke="#000" strokeWidth="3" />
      <path d="M1253 712V1200" stroke="#fff" strokeWidth="3" />

      {/* roof fittings */}
      <path d="M1132 314L1175 284L1217 310L1175 340z" fill="#fff" strokeWidth="5" />
      <path d="M1148 316L1175 300L1202 313L1175 330z" fill="#ffa6ff" strokeWidth="2" />
      <path d="M1175 284V340M1132 314L1217 310M1153 300L1196 325M1153 326L1196 298" strokeWidth="2" />
      <ellipse cx="1331" cy="223" rx="16" ry="18" fill="#fff" />
      <path d="M1331 240v26M1342 224l6 8M1322 262l28 -4M1322 272l50 -6M1334 252l38 18M1326 258v16M1336 262l24 14M1320 268l18 -10" fill="none" />

      {/* west wing openings */}
      <Opening x={217} y={415} glass="#44e" />
      <Opening x={385} y={512} />
      <Opening x={385} y={636} />
      <Opening x={511} y={587} glass="#3ff" />
      <Opening x={511} y={708} glass="#f44" />
      <Opening x={511} y={830} glass="#44e" />
      <Opening x={627} y={652} glass="#3ff" />
      <Opening x={283} y={698} />
      <Opening x={421} y={775} />
      <path d="M264 690V788M270 694V790" stroke="#fff" strokeWidth="3" />

      {/* east block openings */}
      <Opening x={1165} y={700} />
      <Opening x={1351} y={698} flip />
      <Opening x={1507} y={608} flip glass="#ffa6ff" />
      <Opening x={1507} y={732} flip glass="#3ff" />
      <Opening x={1507} y={853} flip glass="#f44" />
      <Opening x={1507} y={975} flip glass="#44e" />
      <Opening x={1588} y={563} flip />
      <Opening x={1588} y={806} flip />
      <Opening x={1627} y={662} flip glass="#3ff" />
      <Opening x={1627} y={907} flip glass="#44e" />
      <Opening x={1312} y={845} flip />
      <Opening x={1312} y={965} flip />
      <Opening x={1312} y={1087} flip />
      {[812, 932].map((y) => (
        <g key={y}>
          <path d={`M970 ${y + 18}L1003 ${y}v62l-33 18z`} fill="#00f" />
          <path d={`M972 ${y + 22}L994 ${y + 10}v46l-22 12z`} fill="#000" />
          <path d={`M976 ${y + 26}l8 -4v34l-8 4z`} fill="#fff" stroke="none" />
        </g>
      ))}
      {[880, 1002, 1124, 1245].map((y) => (
        <path key={y} d={`M995 ${y + 2}l7 -9 12 3 3 6 -10 7z`} fill="#fff" strokeWidth="4" />
      ))}

      {/* west balconies */}
      <path d="M93 460L190 405V500L150 480z" fill="#fff" />
      <path d="M93 455L190 402M130 478L190 442M148 425V470" fill="none" strokeWidth="4" />
      <Rail pts={[[93, 455], [232, 530], [282, 508]]} posts={[[140, 481], [187, 506]]} />
      <path d="M93 580L160 548L190 560V640z" fill="#fff" />
      <path d="M93 575L160 546M130 598L190 565M145 550V592" fill="none" strokeWidth="4" />
      <Rail pts={[[93, 575], [222, 645]]} posts={[[133, 597], [178, 621]]} />
      <path d="M222 585L284 558V685L232 708L222 700z" fill="#f00" strokeWidth="4" />
      <path d="M232 590V706" strokeWidth="4" />

      {/* middle bay */}
      <path d="M662 712L900 850V1095L662 1005z" fill="#00f" />
      <Patio x={760} y={765} h={50} />
      <Patio x={760} y={885} h={50} />
      <Patio x={760} y={1010} h={50} />
      <path d="M672 845L692 857V895L672 880zM672 970L692 980V1015L672 1000z" fill="#fff" strokeWidth="5" />
      <path d="M722 750V1060" stroke="#fff" strokeWidth="5" />
      <path d="M828 815L898 855V915L828 880zM828 930L898 970V1040L828 1000zM828 1050L955 1120V1178L828 1112z" fill="#00f" stroke="none" />
      <path d="M662 718L718 750V812L662 830z" fill="#0ff" />
      <path d="M900 852L955 822V945L900 972z" fill="#0ff" />
      <path d="M925 852L952 838V892L925 905z" fill="#00f" />
      <path d="M662 712L720 678L955 808V822L900 852z" fill="#fff" />
      <path d="M662 718L900 858L955 828" fill="none" />
      <Rail pts={[[725, 630], [955, 757], [1078, 690]]} h={48} posts={[[735, 635], [785, 663], [835, 690], [892, 722], [966, 752], [1018, 722]]} />
      <path d="M955 820L1078 752" stroke="#ffa6ff" strokeWidth="6" />
      <Rail pts={[[668, 792], [893, 912]]} h={48} posts={[[728, 824], [782, 853], [838, 882]]} />
      <path d="M900 855V972M893 905V965" strokeWidth="4" />
      <path d="M658 908L710 878V930L658 960z" fill="#e4e4fa" />
      <Rail pts={[[658, 908], [900, 1045], [952, 1018]]} posts={[[728, 948], [778, 976], [830, 1005], [882, 1034]]} />
      <Opening x={882} y={1085} />
      <path d="M955 850V1178" />

      {/* entrance slabs */}
      <Slab top="M650 1097L735 1060L950 1175L858 1216z" edge={[[650, 1097], [858, 1216], [935, 1172]]} />
      <path d="M735 1055L828 1108M735 1062L826 1114" strokeWidth="4" />
      <Slab top="M1000 1150L1085 1112L1250 1205L1168 1248z" edge={[[1000, 1150], [1168, 1248], [1245, 1208]]} />
      <path d="M935 1172L955 1182L1000 1160V1195L955 1215L935 1205zM955 1182V1215" fill="#fff" strokeWidth="2" />

      {/* south balconies */}
      <Patio x={1097} y={778} h={88} />
      <Patio x={1097} y={925} h={60} />
      <Patio x={1097} y={1050} h={50} />
      <Rail pts={[[1030, 857], [1208, 952], [1258, 932]]} posts={[[1085, 886], [1140, 916], [1192, 944]]} />
      <Rail pts={[[1030, 979], [1208, 1074], [1258, 1052]]} posts={[[1085, 1008], [1140, 1038], [1192, 1066]]} />

      {/* east balconies */}
      <path d="M1665 492L1700 472V560L1665 580z" fill="#fff" strokeWidth="5" />
      <path d="M1740 462L1762 470V560L1740 570zM1702 610V815M1720 600V810M1742 590V800M1758 590V800" fill="#fff" strokeWidth="5" />
      {[0, 122, 244].map((d) => (
        <g key={d}>
          <path d={`M1665 ${635 + d}l30 8v50l-30 10z`} fill="#fff" strokeWidth="6" />
          <Rail pts={[[1660, 582 + d], [1682, 592 + d], [1775, 537 + d]]} posts={[[1705, 580 + d]]} />
        </g>
      ))}
      <path d="M1758 850L1850 800V845L1762 902z" fill="#000" />
      <path d="M1768 862L1790 850V870L1768 882zM1800 842L1822 828V850L1800 862z" fill="#fff" stroke="none" />
      <path d="M1762 888L1848 842V850L1764 898z" fill="#fff" strokeWidth="2" />
      <path d="M1778 818L1900 752V772L1785 838" fill="#00f" />
      <path d="M1858 800V855M1866 832l12 6v20" strokeDasharray="8 5" fill="none" />
    </g>
  );
}

function ViewCube() {
  return (
    <svg viewBox="81 231 396 327" className="absolute top-[52px] right-[25px] h-[109px] w-[132px]" aria-label="View cube">
      <path
        fillRule="evenodd"
        d="M86 424a193 128 0 1 0 386 0a193 128 0 1 0 -386 0M131 424a148 91 0 1 0 296 0a148 91 0 1 0 -296 0"
        fill="#f1f1f1"
        stroke="#bbb"
        strokeWidth="3"
        strokeDasharray="5 3"
      />
      <ellipse cx="279" cy="425" rx="125" ry="65" fill="url(#cubeShadow)" />
      <g fill="#ddd" stroke="#a0a0a0" strokeWidth="2" fontSize="48" fontWeight="bold" textAnchor="middle" fontFamily="Liberation Sans, sans-serif">
        <text transform="translate(150 514) rotate(-28)">S</text>
        <text transform="translate(406 512) rotate(28)">E</text>
        <text transform="translate(166 350) rotate(25)" fontSize="32">W</text>
        <text transform="translate(396 352) rotate(-25)" fontSize="32">N</text>
      </g>
      <path d="M175 285L279 345V465L182 402z" fill="url(#cubeFace)" stroke="#999" strokeWidth="3" />
      <path d="M383 285L279 345V465L377 402z" fill="url(#cubeFace)" stroke="#999" strokeWidth="3" />
      <path d="M175 285L279 234L383 285L279 345z" fill="#f4f4f4" stroke="#999" strokeWidth="3" />
      <path d="M258 332L279 322L300 332V352L279 364L258 352z" fill="#dde1ea" />
      <path d="M279 345V364" stroke="#999" strokeWidth="3" />
      <g fill="#8f959e" fontWeight="bold" textAnchor="middle" fontFamily="Liberation Sans, sans-serif" fontSize="26">
        <text transform="translate(224 386) rotate(27)">FRONT</text>
        <text transform="translate(336 386) rotate(-27)">RIGHT</text>
        <text transform="translate(276 296) rotate(26)">TOP</text>
      </g>
    </svg>
  );
}

function NavBar() {
  return (
    <div className="absolute top-[171px] right-px flex h-[118px] w-9 flex-col items-center rounded-md border-2 border-[#bdbdbd] bg-[#f4f4f4]">
      <button type="button" aria-label="Close navigation" className="mt-0.5 mr-0.5 flex size-2 items-center justify-center self-end rounded-full bg-[#aaa]">
        <X size={6} strokeWidth={4} color="#fff" />
      </button>
      <button type="button" aria-label="Steering wheel" className="mt-2">
        <Ico size={24} box={24}>
          <g stroke="#8d929c">
            <path d="M12 2h10v10a10 10 0 1 1-10-10z" fill="#e6e9f0" />
            <circle cx="12" cy="12" r="5.500" fill="#f6f6f8" />
            <path d="M5 19l3-3M19 19l-3-3" />
          </g>
        </Ico>
      </button>
      <span className="mt-2 opacity-60"><Caret /></span>
      <span className="mt-1 h-px w-[26px] bg-[#bbb]" />
      <button type="button" aria-label="Zoom" className="mt-2">
        <Ico size={18} box={18}>
          <path d="M2 2h10v10H2z" fill="#b9d6a4" stroke="#94b183" />
          <circle cx="12" cy="12" r="3.500" fill="#eee" stroke="#8d929c" />
          <path d="M14.500 14.500l3 3" stroke="#8d929c" strokeWidth="2" />
        </Ico>
      </button>
      <span className="mt-2 opacity-60"><Caret /></span>
      <span className="mt-auto mr-0.5 mb-1 flex size-2 items-center justify-center self-end rounded-full bg-[#aaa]">
        <span className="h-px w-1 bg-white" />
      </span>
    </div>
  );
}

/* ---------- view control bar ---------- */

const redX = <path d="M10 10l7 7M17 10l-7 7" stroke="#d01818" strokeWidth="2.200" />;
const bulb = (
  <>
    <circle cx="14" cy="9" r="3" fill="#cfe6fb" stroke="#2878c8" />
    <path d="M14 12v4" stroke="#2878c8" strokeWidth="2" />
  </>
);

const viewTools: [string, ReactNode][] = [
  ["Detail level", <><path d="M2 3h15v12H2z" fill="#eee" /><path d="M2 4l11 11M6 4l11 11M10 4l7 7M2 8l7 7M17 4L6 15M13 4L2 15M9 4L2 11M17 8l-7 7" strokeWidth="0.700" /></>],
  ["Visual style", <path d="M2 8l4-4h11v7l-4 5H2zM2 8h11v8M13 8l4-4" fill="#f4f4f4" />],
  ["Sun path", <><circle cx="8" cy="8" r="4" fill="#ffe070" stroke="#d89010" /><path d="M8 1v2M8 13v2M1 8h2M3 3l1 1M13 3l-1 1M3 13l1-1" stroke="#d89010" />{redX}</>],
  ["Shadows", <><circle cx="8" cy="7" r="5" fill="#bfe0f8" stroke="#2878c8" /><path d="M3 15h7" strokeWidth="2" />{redX}</>],
  ["Rendering", <><path d="M5 7l1 7h6V7zM5 8L2 4M5 7q3-3 7 0M8 5V3" fill="#ddd" />{bulb}</>],
  ["Crop view", <><path d="M2 6h13M6 3v12M2 14h8M8 8h3" stroke="#2878c8" strokeWidth="1.600" /><path d="M1 6h3M9 9h3v3H9z" />{redX}</>],
  ["Crop region", <><path d="M2 6h9M5 3v12M2 14h3M8 9h3M8 13h3" strokeWidth="1.600" stroke="#3a6ca0" />{bulb}</>],
  ["Lock view", <><path d="M3 8l5-6 7 5v8l-6 2-6-3z" fill="#eee" /><path d="M10 11h6v5h-6zM11 11V9h4v2" fill="#9cc" /></>],
  ["Temporary hide", <><circle cx="6" cy="12" r="3" fill="#eee" /><circle cx="13" cy="10" r="3" fill="#cfe6fb" /><path d="M3 12L1 6l2-1M16 9l-1-6-2 0M9 11l1-1" /></>],
  ["Reveal hidden", <g transform="translate(-4 -1)">{bulb}</g>],
  ["Temporary properties", <><path d="M3 5h13v10H3z" strokeDasharray="2 1" strokeWidth="1.800" stroke="#222" /><path d="M10 9h6v6h-6z" fill="#ddd" /></>],
  ["Analytical model", <><path d="M2 5h10M2 8h10M2 11h10M5 3v12M9 3v12" /><path d="M5 11v6M9 11v6" stroke="#c02418" />{bulb}</>],
  ["Displacement", <path d="M2 8l4-4h5v9l-3 3H2zM8 8l4-4h5v7l-4 4H8zM2 8h11v7" fill="#ccc" />],
  ["Constraints", <><path d="M2 3v5M17 3v5M2 5h15M2 14h6M2 8v6" strokeDasharray="8 1" /><path d="M10 11h7v5h-7zM11 11V9h5v2" fill="#555" /></>],
];

const viewTabs = [
  { label: "{3D}", width: "w-[129px]" },
  { label: "BYCHECK - R+1 - Travail JBO - Wall...", width: "w-[243px]", plan: true },
  { label: "BYCHECK - -3D- - Walls - Base co...", width: "w-[247px]", active: true },
];

function Workspace() {
  return (
    <main className="flex min-w-0 flex-1 flex-col">
      <div className="flex h-[22px] shrink-0 items-stretch text-[#444]">
        {viewTabs.map((tab) => (
          <div key={tab.label} className={clsx("flex shrink-0 items-center gap-1.5 pb-0.5 pl-1", tab.width, tab.active && "bg-white font-bold text-black")}>
            {tab.plan ? (
              <Ico size={18} box={20}>
                <path d="M3 3h10v5h4v9H3zM9 8h8M9 8v9" fill="#ddd" stroke="#777" />
              </Ico>
            ) : (
              <House size={17} />
            )}
            <button type="button" className="flex-1 text-left whitespace-nowrap">{tab.label}</button>
            {tab.active && (
              <button type="button" aria-label="Close view" className="pr-1">
                <X size={13} strokeWidth={3} color="#222" />
              </button>
            )}
          </div>
        ))}
        <button type="button" aria-label="Open views" className="mr-1 ml-auto flex flex-col items-center justify-center gap-0.5">
          <span className="h-px w-2 bg-[#333]" />
          <Caret size={8} />
        </button>
      </div>
      <div className="flex min-h-0 flex-1 bg-white">
        <div className="relative min-w-0 flex-1">
          <svg viewBox="0 0 1266 922" className="h-full w-full" role="img" aria-label="3D model">
            <g stroke="#000" strokeWidth="1.500" fill="#000">
              <path d="M643 42V8M643 42L671 26M643 42L671 58" fill="none" />
              <path d="M643 1l4 13h-8zM676 22l-10 9-3-6zM676 61l-13-3 4-6z" stroke="none" />
            </g>
            <Building />
          </svg>
          <ViewCube />
          <NavBar />
        </div>
        <ScrollBar thumb="mt-[438px] h-[17px]" />
      </div>
      <div className="flex h-[18px] shrink-0 items-center border-b-2 border-white bg-[#f0f0f0] text-black">
        <button type="button" className="w-[79px] pl-[26px] text-left whitespace-pre">1 : 100</button>
        {viewTools.map(([name, drawing]) => (
          <button key={name} type="button" aria-label={name} className="flex w-[21px] justify-center">
            <Ico size={17} box={18}>{drawing}</Ico>
          </button>
        ))}
        <ChevronLeft size={12} strokeWidth={3} className="shrink-0" color="#444" />
        <div className="flex h-full flex-1 justify-center">
          <span className="h-full w-4 bg-[#cdcdcd]" />
        </div>
        <ChevronRight size={13} strokeWidth={3} className="mr-5 shrink-0" color="#444" />
      </div>
    </main>
  );
}

/* ---------- status bar ---------- */

const cursor = <path d="M9 7v9l2-2 2 4 2-1-2-4h3z" fill="#fff" stroke="#444" strokeWidth="1" />;

const selectTools: [string, ReactNode][] = [
  ["Select links", <><circle cx="5" cy="6" r="3" stroke="#d8a010" strokeWidth="2" /><circle cx="12" cy="6" r="3" stroke="#d8a010" strokeWidth="2" />{cursor}</>],
  ["Select underlay", <><path d="M2 15h9M2 12h8l3-8z" fill="#cfe6fb" stroke={BLUE} /><path d="M11 2l5 5M16 2l-5 5" stroke="#d01818" strokeWidth="2" />{cursor}</>],
  ["Select pinned", <><path d="M3 2h8v3l-1 4h2v2H2V9h2L3 5zM7 11v5" fill="#f09030" stroke="#a85010" />{cursor}</>],
  ["Select by face", <><path d="M3 4l7-2v12l-7 2z" fill="#a8d8f5" stroke={BLUE} /><path d="M11 2l5 5M16 2l-5 5" stroke="#d01818" strokeWidth="2" />{cursor}</>],
  ["Drag elements", <><path d="M6 1v11M1 6h11M4 3l2-2 2 2M3 4L1 6l2 2M9 4l2 2" stroke="#222" />{cursor}</>],
  ["Background processes", <circle cx="9" cy="9" r="5.500" stroke="#aaa" strokeWidth="3" strokeDasharray="3 1.300" />],
];

function StatusBar() {
  return (
    <footer className="flex h-6 shrink-0 items-center text-black">
      <p className="w-[895px] pl-0.5">Click to select, TAB for alternates, CTRL adds, SHIFT unselects.</p>
      <Ico size={20} box={20}>
        <path d="M2 10l2-2h5v9l-2 2H2zM2 10h5v9M7 10l2-2" fill="#8cd0f4" stroke={BLUE} />
        <path d="M6 4l2-2h5v5h-2v2M6 4v3" fill="#a8d890" stroke="#2c7a22" />
        <path d="M15 18v-7q-3-1-2-4l2 2 2-2q2 3-1 4v7z" fill="#ddd" />
      </Ico>
      <div className="relative ml-1.5 h-[18px] w-[204px]">
        <select aria-label="Workset" className="h-full w-full appearance-none bg-white" />
        <ChevronDown size={13} className="pointer-events-none absolute top-[3px] right-0 text-[#999]" />
      </div>
      <button type="button" className="ml-2 flex w-[54px] items-center">
        <Ico size={18} box={20} off>
          <path d="M6 2h12l-2 5h-5l-4 11H2l6-9z" fill="#999" />
        </Ico>
        <span className="pl-0.5">:0</span>
      </button>
      <button type="button" aria-label="Design options" className="w-[26px]">
        <Ico size={18} box={20}>
          <path d="M2 2h16v16H2zM2 4h16M5 9h2M5 14h2M9 9h6M9 12h6M9 15h6" fill="#eee" />
        </Ico>
      </button>
      <button type="button" aria-label="Add to set" className="w-[26px]">
        <Ico size={18} box={20}>
          <path d="M3 2h15v16H3z" fill="#999" stroke="none" />
          <path d="M2 12h7v-3l5 5-5 4v-3H2" stroke="#ddd" />
        </Ico>
      </button>
      <div className="relative h-[18px] w-[202px]">
        <select aria-label="Design option" className="h-full w-full appearance-none bg-white px-0.5">
          <option>Main Model</option>
        </select>
        <ChevronDown size={13} className="pointer-events-none absolute top-[3px] right-0 text-[#444]" />
      </div>
      <label className="ml-[11px] flex flex-1 items-center gap-[3px]">
        <span className="relative flex size-[14px]">
          <input type="checkbox" defaultChecked className="peer size-[14px] appearance-none border border-[#555] bg-white" />
          <svg viewBox="0 0 14 14" className="pointer-events-none absolute inset-0 hidden peer-checked:block" aria-hidden="true">
            <path d="M3 7l3 4 5-8" fill="none" stroke="#3fa018" strokeWidth="2.500" />
          </svg>
        </span>
        Exclude Options
      </label>
      {selectTools.map(([name, drawing]) => (
        <button key={name} type="button" aria-label={name} className="flex w-[26px] justify-center">
          <Ico size={18} box={18}>{drawing}</Ico>
        </button>
      ))}
      <button type="button" className="mr-[54px] flex w-[46px] items-center pl-0.5">
        <Ico size={18} box={20}>
          <path d="M2 3h16l-6 8v6l-4 2v-8z" fill={METAL} />
        </Ico>
        :0
      </button>
    </footer>
  );
}

export default function App() {
  return (
    <div className="flex h-screen flex-col overflow-hidden bg-[#cbcbcb] font-['Noto_Sans','Open_Sans',sans-serif] text-[11px] leading-4">
      <Defs />
      <TitleBar />
      <MenuTabs />
      <Ribbon />
      <div className="h-[26px] shrink-0 bg-[#eee]" />
      <div className="flex min-h-0 flex-1 border-t-2 border-[#c8c8c8]">
        <aside className="flex w-[638px] shrink-0 flex-col border-r-3 border-[#cbcbcb] bg-[#eee]">
          <Properties />
          <ProjectBrowser />
        </aside>
        <Workspace />
      </div>
      <StatusBar />
    </div>
  );
}
